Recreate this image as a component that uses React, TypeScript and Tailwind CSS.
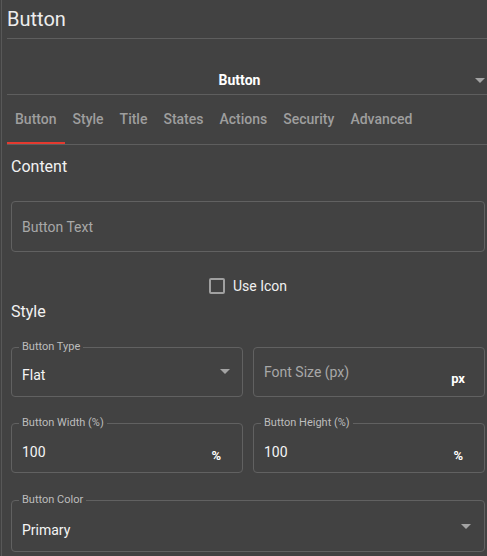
import type { ReactNode } from 'react'

const TABS = ['Button', 'Style', 'Title', 'States', 'Actions', 'Security', 'Advanced']

function Caret({ className = '' }: { className?: string }) {
  return (
    <span
      className={
        'block w-0 h-0 border-l-[5px] border-r-[5px] border-t-[5px] border-l-transparent border-r-transparent border-t-[#a3a3a3] ' +
        className
      }
    />
  )
}

function Outlined({ label, children, className = '' }: { label: string; children: ReactNode; className?: string }) {
  return (
    <fieldset className={'border border-[#616161] rounded-[4px] min-w-0 ' + className}>
      <legend className="ml-[7px] px-[3px] text-[11px] leading-[14px] text-[#bdbdbd]">{label}</legend>
      {children}
    </fieldset>
  )
}

export default function App() {
  return (
    <div className="w-[487px] h-[556px] overflow-hidden bg-[#424242] pl-px font-['Roboto',sans-serif] text-[#eeeeee]">
      <div className="h-full border-l border-[#585858] pl-[5px]">
        {/* Header */}
        <div className="pt-[5px] pb-[5px] border-b border-[#5e5e5e] text-[20px] leading-[28px] text-[#ededed]">Button</div>

        {/* Component select */}
        <div className="flex items-center pt-[31px] pb-[4px] border-b border-[#5e5e5e]">
          <span className="flex-1 text-center text-[14px] leading-[20px] font-bold text-white">Button</span>
          <span className="w-[15px] flex justify-start pl-[3px]">
            <Caret />
          </span>
        </div>

        {/* Tabs */}
        <div className="flex border-b border-[#5e5e5e]">
          {TABS.map((t, i) => (
            <div
              key={t}
              className={
                'px-2 pt-[14px] pb-[13px] text-[14px] leading-[20px] font-medium text-[#9e9e9e] border-b-2 ' +
                (i === 0 ? 'border-[#e53a2f]' : 'border-transparent')
              }
            >
              {t}
            </div>
          ))}
        </div>

        <div className="pl-[4px] pr-[2px]">
          <div className="pt-[10px] text-[16px] leading-[24px] text-[#f2f2f2]">Content</div>

          <div className="mt-[22px] h-[51px] border border-[#616161] rounded-[4px] flex items-center px-[10px] pt-px text-[14px] text-[#a8a8a8]">
            Button Text
          </div>

          <div className="mt-[24px] flex items-center justify-center gap-[8px] h-[20px]">
            <span className="w-4 h-4 border-2 border-[#a0a0a0] rounded-[2px]" />
            <span className="text-[14px] leading-[20px] text-[#f0f0f0] -mt-px">Use Icon</span>
          </div>

          <div className="mt-[4px] text-[16px] leading-[24px] text-[#f2f2f2]">Style</div>

          <div className="mt-[16px] grid grid-cols-2 gap-x-[10px] items-start">
            <Outlined label="Button Type">
              <div className="h-[42px] flex items-center pl-[10px] pr-[12px]">
                <span className="flex-1 text-[14px] leading-[20px] text-[#f5f5f5]">Flat</span>
                <Caret className="mb-[7px]" />
              </div>
            </Outlined>
            <div className="mt-[7px] h-[50px] border border-[#616161] rounded-[4px] flex items-center pl-[10px] pr-[19px]">
              <span className="flex-1 text-[14px] leading-[20px] text-[#a8a8a8]">Font Size (px)</span>
              <span className="mt-[13px] text-[13px] leading-[20px] font-bold text-white">px</span>
            </div>
          </div>

          <div className="mt-[19px] grid grid-cols-2 gap-x-[10px]">
            <Outlined label="Button Width (%)">
              <div className="h-[42px] flex items-center pl-[10px] pr-[21px] pt-px">
                <span className="flex-1 text-[14px] leading-[20px] text-[#f5f5f5]">100</span>
                <span className="mt-[8px] text-[13px] leading-[20px] font-bold text-white">%</span>
              </div>
            </Outlined>
            <Outlined label="Button Height (%)">
              <div className="h-[42px] flex items-center pl-[10px] pr-[21px] pt-px">
                <span className="flex-1 text-[14px] leading-[20px] text-[#f5f5f5]">100</span>
                <span className="mt-[8px] text-[13px] leading-[20px] font-bold text-white">%</span>
              </div>
            </Outlined>
          </div>

          <Outlined label="Button Color" className="mt-[20px]">
            <div className="h-[44px] flex items-center pl-[10px] pr-[13px] pt-[2px]">
              <span className="flex-1 text-[14px] leading-[20px] text-[#f5f5f5]">Primary</span>
              <Caret className="mb-[8px]" />
            </div>
          </Outlined>
        </div>
      </div>
    </div>
  )
}
